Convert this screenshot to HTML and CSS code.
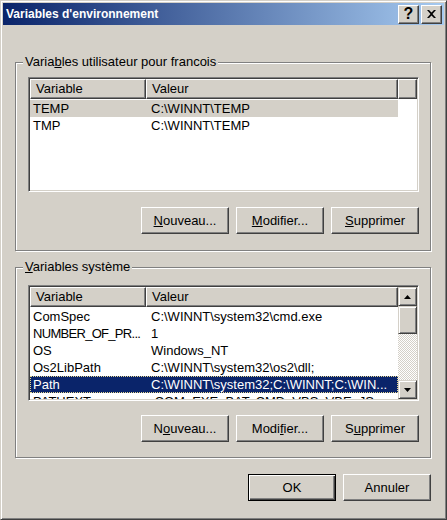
FILE: index.html
```html
<!DOCTYPE html>
<html>
<head>
<meta charset="utf-8">
<link rel="stylesheet" href="styles.css">
</head>
<body>
<div class="window">
  <div class="titlebar">
    <span class="title">Variables d'environnement</span>
    <div class="tbtns">
      <span class="tbtn help">?</span>
      <span class="tbtn close"><svg width="9" height="8" viewBox="0 0 9 8"><path d="M0 0h2l2.5 2.5L7 0h2L5.5 4 9 8H7L4.5 5.5 2 8H0l3.5-4z" fill="#000"/></svg></span>
    </div>
  </div>
  <div class="content">
    <fieldset class="group g1">
      <legend>Varia<u>b</u>les utilisateur pour francois</legend>
      <div class="list">
        <div class="main">
          <div class="head"><span class="hc c1">Variable</span><span class="hc c2">Valeur</span><span class="hc fill"></span></div>
          <div class="rows">
            <div class="row inactive"><span class="c1">TEMP</span><span class="c2">C:\WINNT\TEMP</span></div>
            <div class="row"><span class="c1">TMP</span><span class="c2">C:\WINNT\TEMP</span></div>
          </div>
        </div>
      </div>
      <div class="btnrow">
        <button class="btn"><u>N</u>ouveau...</button>
        <button class="btn"><u>M</u>odifier...</button>
        <button class="btn"><u>S</u>upprimer</button>
      </div>
    </fieldset>
    <fieldset class="group g2">
      <legend><u>V</u>ariables système</legend>
      <div class="list">
        <div class="main">
          <div class="head"><span class="hc c1">Variable</span><span class="hc c2">Valeur</span></div>
          <div class="rows">
            <div class="row"><span class="c1">ComSpec</span><span class="c2">C:\WINNT\system32\cmd.exe</span></div>
            <div class="row"><span class="c1 tight">NUMBER_OF_PR...</span><span class="c2">1</span></div>
            <div class="row"><span class="c1">OS</span><span class="c2">Windows_NT</span></div>
            <div class="row"><span class="c1">Os2LibPath</span><span class="c2">C:\WINNT\system32\os2\dll;</span></div>
            <div class="row active"><span class="c1">Path</span><span class="c2">C:\WINNT\system32;C:\WINNT;C:\WIN...</span></div>
            <div class="row"><span class="c1">PATHEXT</span><span class="c2">.COM;.EXE;.BAT;.CMD;.VBS;.VBE;.JS;...</span></div>
          </div>
        </div>
        <div class="scrollbar">
          <div class="sbtn"><svg width="7" height="4" viewBox="0 0 7 4"><path d="M3.5 0L7 4H0z" fill="#000"/></svg></div>
          <div class="thumb"></div>
          <div class="track"></div>
          <div class="sbtn"><svg width="7" height="4" viewBox="0 0 7 4"><path d="M0 0h7L3.5 4z" fill="#000"/></svg></div>
        </div>
      </div>
      <div class="btnrow">
        <button class="btn">N<u>o</u>uveau...</button>
        <button class="btn">Modi<u>f</u>ier...</button>
        <button class="btn">S<u>u</u>pprimer</button>
      </div>
    </fieldset>
    <div class="dlgbtns">
      <button class="btn default">OK</button>
      <button class="btn">Annuler</button>
    </div>
  </div>
</div>
</body>
</html>
```
FILE: styles.css
```css
* { box-sizing: border-box; }
html, body { margin: 0; padding: 0; background: #d4d0c8; }
body { font-family: "Liberation Sans", Arial, sans-serif; font-size: 13px; color: #000; }

.window {
  width: 447px; height: 520px;
  border: 1px solid; border-color: #d4d0c8 #404040 #404040 #d4d0c8;
  box-shadow: inset 1px 1px #fff, inset -1px -1px #808080;
  padding: 2px;
  display: flex; flex-direction: column;
  background: #d4d0c8;
}
.titlebar {
  height: 22px; flex: none;
  background: linear-gradient(to right, #0a246a, #a6caf0);
  display: flex; align-items: center; justify-content: space-between;
  padding: 0 2px 0 2px;
}
.title { color: #fff; font-weight: bold; font-size: 12px; padding-left: 1px; }
.tbtns { display: flex; gap: 2px; }
.tbtn {
  width: 21px; height: 19px;
  background: #d4d0c8;
  border: 1px solid; border-color: #fff #404040 #404040 #fff;
  box-shadow: inset -1px -1px #808080;
  display: flex; align-items: center; justify-content: center;
  font-weight: bold; font-size: 16px; line-height: 1;
}
.content { flex: 1; padding: 0 12px 0 12px; display: flex; flex-direction: column; }

.group {
  margin: 0; width: 416px; flex: none;
  border: 1px solid #808080;
  box-shadow: inset 1px 1px #fff, 1px 1px #fff;
  padding: 7px 11px 16px 12px;
}
.group legend { padding: 0 2px; margin-left: -5px; line-height: 16px; background: #d4d0c8; }
.g1 { margin-top: 29px; }
.g2 { margin-top: 8px; padding-top: 10px; padding-bottom: 15px; }

.list {
  width: 391px; height: 116px;
  border: 1px solid; border-color: #808080 #fff #fff #808080;
  box-shadow: inset 1px 1px #404040, inset -1px -1px #d4d0c8;
  padding: 1px;
  background: #fff;
  display: flex;
}
.g1 .list { height: 115px; }
.main { flex: 1; overflow: hidden; display: flex; flex-direction: column; }
.head { display: flex; height: 20px; flex: none; background: #d4d0c8; }
.hc {
  height: 20px; line-height: 18px; padding-left: 5px;
  border: 1px solid; border-color: #fff #404040 #404040 #fff;
  box-shadow: inset -1px -1px #808080;
  overflow: hidden;
}
.head .c1 { width: 116px; }
.head .c2 { width: 252px; }
.head .fill { flex: 1; }
.rows { padding-top: 1px; }
.row { display: flex; height: 17px; line-height: 17px; width: 368px; white-space: nowrap; }
.row .c1 { width: 116px; padding-left: 3px; overflow: hidden; }
.row .c1.tight { letter-spacing: -0.7px; }
.row .c2 { width: 252px; padding-left: 5px; overflow: hidden; }
.row.inactive { background: #d4d0c8; }
.row.active { background: #0a246a; color: #fff; outline: 1px dotted #e8d890; outline-offset: -1px; }

.scrollbar { width: 19px; display: flex; flex-direction: column; flex: none; }
.sbtn, .thumb {
  background: #d4d0c8;
  border: 1px solid; border-color: #d4d0c8 #404040 #404040 #d4d0c8;
  box-shadow: inset 1px 1px #fff, inset -1px -1px #808080;
  display: flex; align-items: center; justify-content: center;
}
.sbtn { height: 19px; flex: none; }
.thumb { height: 28px; flex: none; }
.track { flex: 1; background: repeating-conic-gradient(#fff 0 25%, #d4d0c8 0 50%) 0 0 / 2px 2px; }

.btnrow { display: flex; justify-content: flex-end; gap: 7px; margin-top: 15px; }
.g2 .btnrow { margin-top: 14px; }
.btn {
  width: 88px; height: 27px;
  font: inherit; color: #000;
  background: #d4d0c8;
  border: 1px solid; border-color: #fff #404040 #404040 #fff;
  box-shadow: inset -1px -1px #808080;
  padding: 0; margin: 0;
}
.dlgbtns { display: flex; justify-content: flex-end; gap: 7px; margin-top: 16px; width: 416px; }
.btn.default {
  border: 1px solid #000;
  box-shadow: inset 1px 1px #fff, inset -1px -1px #404040, inset -2px -2px #808080;
}
```
